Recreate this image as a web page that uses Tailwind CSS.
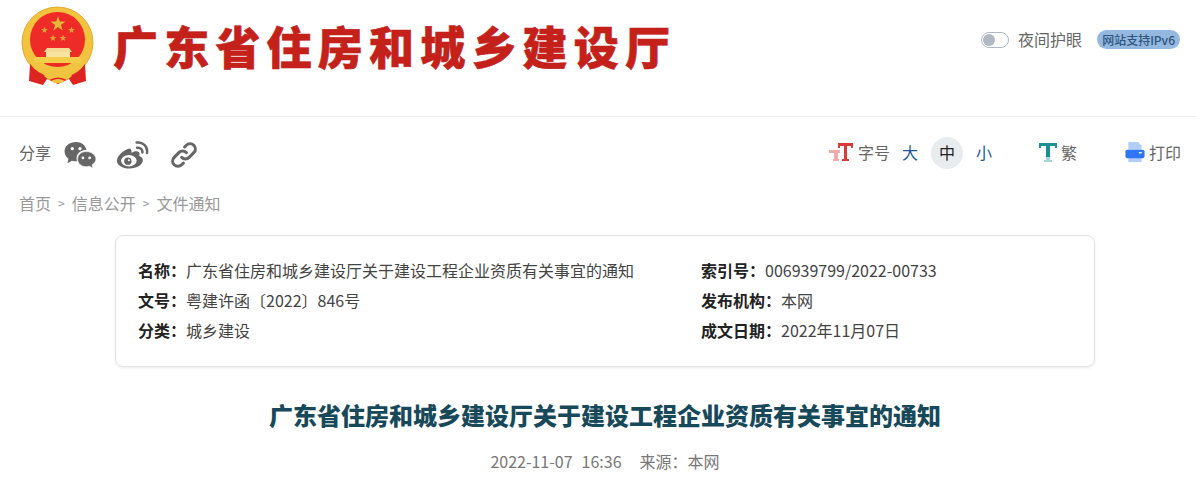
<!DOCTYPE html>
<html lang="zh-CN">
<head>
    <meta charset="UTF-8">
    <title>广东省住房和城乡建设厅关于建设工程企业资质有关事宜的通知</title>
    <script src="https://cdn.jsdelivr.net/npm/@tailwindcss/browser@4"></script>
</head>
<body class="bg-white h-[484px] overflow-hidden font-['Noto_Sans_CJK_SC','Noto_Sans',sans-serif] text-[#666]">
    <!-- 头部 -->
    <header class="h-[117px] border-b border-[#eeeeee] flex justify-between pl-5 pr-4">
        <div class="flex items-start">
            <!-- 国徽 -->
            <svg class="w-[76px] h-[80px] mt-[6px]" viewBox="0 0 76 80">
                <defs>
                    <polygon id="star" points="0,-1 .225,-.309 .951,-.309 .363,.118 .588,.809 0,.382 -.588,.809 -.363,.118 -.951,-.309 -.225,-.309"/>
                </defs>
                <circle cx="37.500" cy="36.500" r="35.500" fill="#f1c33e" stroke="#e3a92d" stroke-width="1"/>
                <circle cx="37.500" cy="33.500" r="27.500" fill="#ee2b26"/>
                <use href="#star" fill="#e5b838" transform="translate(38 18) scale(8)"/>
                <use href="#star" fill="#d8ab38" transform="translate(24.500 24) scale(3.600)"/>
                <use href="#star" fill="#d8ab38" transform="translate(51.500 24) scale(3.600)"/>
                <use href="#star" fill="#d8ab38" transform="translate(33 32) scale(3.600)"/>
                <use href="#star" fill="#d8ab38" transform="translate(43 32) scale(3.600)"/>
                <!-- 天安门 -->
                <path d="M27 42 H49 L52 46 H24 Z" fill="#f4dc96"/>
                <path d="M26 46 H50 V51 H26 Z" fill="#f7e3a0"/>
                <path d="M15 51 H60 L62 57 H13 Z" fill="#f3cc4a"/>
                <!-- 绶带 -->
                <path d="M10 58 L9 75 L23 79 L27 73 L38 78 L49 73 L53 79 L66 75 L65 58 Q58 68 48 70 L38 68 L28 70 Q18 68 10 58 Z" fill="#dc2420"/>
                <path d="M24 70 Q30 63 38 66 Q46 63 52 70 L47 74 Q38 69 29 74 Z" fill="#f1c33e"/>
                <path d="M31 75 Q38 71 45 75 L41 77 H35 Z" fill="#f1c33e"/>
            </svg>
            <div class="ml-[17px] mt-[16px] text-[45px] leading-[60px] tracking-[6.2px] font-black text-[#c4211a] whitespace-nowrap [-webkit-text-stroke:0.6px_#c4211a]">广东省住房和城乡建设厅</div>
        </div>
        <div class="flex items-start pt-[28px]">
            <span class="w-[28px] h-[16px] mt-[4px] rounded-full border border-[#b0b8c4] flex items-center pl-[1px]">
                <span class="w-[12px] h-[12px] rounded-full bg-[#b0b8c4]"></span>
            </span>
            <span class="ml-[9px] text-[16px] leading-[23px]">夜间护眼</span>
            <span class="ml-[15px] mt-[2px] h-[19px] px-[5px] rounded-full bg-[#94b8de] text-[#2f5580] text-[12px] leading-[19px] font-medium">网站支持IPv6</span>
        </div>
    </header>

    <!-- 工具栏 -->
    <div class="h-[74px] flex justify-between pl-[19px] pr-[15px] pt-[20px]">
        <div class="flex items-start">
            <span class="text-[16px] leading-[30px]">分享</span>
            <svg class="w-[34px] h-[27px] ml-[12px] mt-[4px]" viewBox="0 0 34 28" fill="#666">
                <path d="M13 1C6 1 1 5 1 11c0 3.200 1.600 5.600 4 7.400L4 23l4.700-2.600c1.500.4 2.800.6 4.300.6h1.100C13.500 19.800 13 17 14 15c1.500-3.500 5.500-6 9.700-5.500C23 4.500 18.500 1 13 1z"/>
                <circle cx="9" cy="8" r="1.700" fill="#fff"/><circle cx="17" cy="8" r="1.700" fill="#fff"/>
                <path d="M23.500 11C18.200 11 14.500 14.500 14.500 18.800s3.700 7.800 9 7.800c1.100 0 2.100-.2 3.100-.5l3.900 1.900-.9-3.500c2.400-1.500 3.900-3.500 3.900-5.700 0-4.300-4.500-7.800-10-7.800z" stroke="#fff" stroke-width="0.600"/>
                <circle cx="20" cy="17.500" r="1.400" fill="#fff"/><circle cx="27" cy="17.500" r="1.400" fill="#fff"/>
            </svg>
            <svg class="w-[33px] h-[28px] ml-[19px] mt-[4px]" viewBox="1 1 30 27" fill="none">
                <path d="M13 8C7 10 1 15.500 1 20c0 4.400 5.500 7.500 12 7.500 7.500 0 13-4 13-8 0-2.500-2.200-3.500-3.600-4 .7-1.800.6-3.200-.4-4-1.800-1.200-5-.2-7 .8 .4-2.500-.5-5-3-4.300z" fill="#666"/>
                <ellipse cx="12.500" cy="20" rx="7.500" ry="5.500" fill="#fff"/>
                <circle cx="11.500" cy="20.500" r="3.500" fill="#666"/>
                <circle cx="12.500" cy="19.500" r="1" fill="#fff"/>
                <path d="M20 2.500C25.500 1.500 31 6 30 12.500M20.500 7.500C23.500 7 26 9.500 25.500 12" stroke="#666" stroke-width="2.400" stroke-linecap="round"/>
            </svg>
            <svg class="w-[28px] h-[28px] ml-[21px] mt-[4px]" viewBox="0 0 24 24" fill="none" stroke="#666" stroke-width="2.600" stroke-linecap="round" stroke-linejoin="round">
                <path d="M10 14a4.500 4.500 0 0 0 6.400 0l4-4a4.500 4.500 0 0 0-6.400-6.400l-1.500 1.500"/>
                <path d="M14 10a4.500 4.500 0 0 0-6.400 0l-4 4a4.500 4.500 0 0 0 6.400 6.400l1.500-1.500"/>
            </svg>
        </div>
        <div class="flex items-start">
            <svg class="w-[25px] h-[19px] mt-[6px]" viewBox="0 0 25 19">
                <path d="M0 7H11V10H9V16H10V18H4V16H5V10H3V10H0Z" fill="#f2aaaa"/>
                <path d="M9 0H24V5H22V3H18V16H20V18H13V16H15V3H11V5H9Z" fill="#d93a3a"/>
            </svg>
            <span class="ml-[4px] text-[16px] leading-[30px]">字号</span>
            <span class="ml-[12px] text-[16px] leading-[30px] text-[#1a5a9c]">大</span>
            <span class="ml-[13px] w-[32px] h-[32px] rounded-full bg-[#e9ecef] text-[16px] leading-[30px] text-center text-[#222]">中</span>
            <span class="ml-[13px] text-[16px] leading-[30px] text-[#1a5a9c]">小</span>
            <svg class="w-[19px] h-[19px] ml-[47px] mt-[6px]" viewBox="0 0 19 19">
                <path d="M0 0H18V5H16V3H11V14H7V3H2V5H0Z" fill="#1a9090"/>
                <path d="M7 14H11V17H13V19H5V17H7Z" fill="#a6d6da"/>
            </svg>
            <span class="ml-[3px] text-[16px] leading-[30px]">繁</span>
            <svg class="w-[20px] h-[21px] ml-[48px] mt-[5px]" viewBox="0 0 20 22">
                <path d="M3 0H13L17 4V8H3Z" fill="#b3cdfb"/>
                <path d="M3 15H17V21H3Z" fill="#b3cdfb"/>
                <rect x="0" y="8" width="20" height="9" rx="2" fill="#2f76f5"/>
                <rect x="14" y="10.500" width="3" height="1.500" fill="#fff"/>
            </svg>
            <span class="ml-[4px] text-[16px] leading-[30px]">打印</span>
        </div>
    </div>

    <!-- 面包屑 -->
    <nav class="flex items-center pl-[19px] h-[24px] text-[16px] leading-[22px] text-[#999]">
        <span>首页</span><span class="mx-[7px] text-[12px]">&gt;</span><span>信息公开</span><span class="mx-[7px] text-[12px]">&gt;</span><span>文件通知</span>
    </nav>

    <!-- 信息卡片 -->
    <section class="mt-[20px] ml-[115px] w-[980px] h-[132px] rounded-lg border border-[#e2e2e2] shadow-[0_1px_3px_rgba(0,0,0,0.08)] pl-[22px] pt-[19px] grid grid-cols-[563px_1fr] auto-rows-[30px] text-[16px] leading-[30px] text-[#444]">
        <div><b class="font-bold text-[#222]">名称：</b>广东省住房和城乡建设厅关于建设工程企业资质有关事宜的通知</div>
        <div><b class="font-bold text-[#222]">索引号：</b>006939799/2022-00733</div>
        <div><b class="font-bold text-[#222]">文号：</b>粤建许函〔2022〕846号</div>
        <div><b class="font-bold text-[#222]">发布机构：</b>本网</div>
        <div><b class="font-bold text-[#222]">分类：</b>城乡建设</div>
        <div><b class="font-bold text-[#222]">成文日期：</b>2022年11月07日</div>
    </section>

    <!-- 标题 -->
    <div class="pl-[14px]">
        <h1 class="mt-[30px] text-center text-[24px] leading-[36px] font-black text-[#17495a]">广东省住房和城乡建设厅关于建设工程企业资质有关事宜的通知</h1>
        <div class="mt-[17px] flex justify-center text-[16px] leading-[22px] text-[#777]">
            <span>2022-11-07</span><span class="ml-[9px]">16:36</span><span class="ml-[18px]">来源：本网</span>
        </div>
    </div>
</body>
</html>
